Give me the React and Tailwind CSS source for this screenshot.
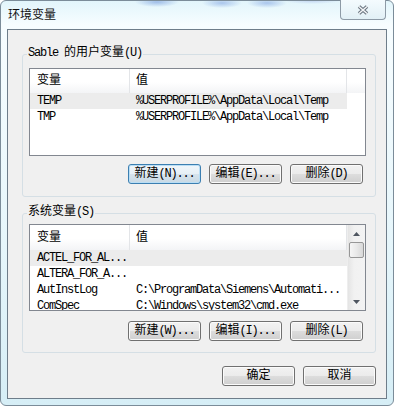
import React from "react";

const latin = "tracking-[-1.2px]";

const Btn = ({ children, focused }) => (
  <div
    className={`flex h-[20px] w-[73px] items-center justify-center rounded-[3px] border ${
      focused
        ? "border-[#3c7fb1] shadow-[inset_0_0_0_1px_#b9def5] bg-[linear-gradient(#f0f6fa_0%,#e6eff5_50%,#d6e3ec_50%,#c9d9e4_100%)]"
        : "border-[#707070] shadow-[inset_0_0_0_1px_#fbfbfb] bg-[linear-gradient(#f2f2f2_0%,#ebebeb_50%,#dddddd_50%,#cfcfcf_100%)]"
    }`}
  >
    <span className="whitespace-nowrap">{children}</span>
  </div>
);

const Row = ({ name, value, selected }) => (
  <div className={`flex h-[16px] w-[317px] shrink-0 items-center ${selected ? "bg-[#ececec]" : ""}`}>
    <div className={`w-[100px] overflow-hidden whitespace-nowrap pl-[7px] ${latin}`}>{name}</div>
    <div className={`w-[217px] overflow-hidden whitespace-nowrap pl-[6px] ${latin}`}>{value}</div>
  </div>
);

const Header = ({ tall }) => (
  <div
    className={`flex ${tall ? "h-[25px]" : "h-[24px]"} shrink-0 bg-[linear-gradient(#ffffff_0%,#ffffff_55%,#f3f4f6_100%)]`}
  >
    <div className="flex w-[100px] items-center border-r border-[#e3e5e8] pl-[7px]">变量</div>
    <div className="flex w-[217px] items-center border-r border-[#e3e5e8] pl-[6px]">值</div>
    <div className="flex-1" />
  </div>
);

const Arrow = ({ down }) => (
  <svg width="7" height="4" viewBox="0 0 7 4">
    <path d={down ? "M0 0H7L3.5 4Z" : "M0 4H7L3.5 0Z"} fill="#4f5660" />
  </svg>
);

const Scrollbar = () => (
  <div className="flex flex-1 flex-col border-l border-[#eeeeee] bg-[linear-gradient(to_right,#e4e4e4,#f1f1f1_35%,#f3f3f3)]">
    <div className="flex h-[17px] items-center justify-center">
      <Arrow />
    </div>
    <div className="mx-[1px] h-[16px] rounded-[2px] border border-[#979797] bg-[linear-gradient(to_right,#f6f6f6,#e9e9e9_50%,#d8d8d8)]" />
    <div className="flex-1" />
    <div className="flex h-[17px] items-center justify-center">
      <Arrow down />
    </div>
  </div>
);

const Group = ({ label, children, className }) => (
  <div className={`relative ml-[14px] flex w-[354px] flex-col rounded-[3px] border border-[#d5dfe5] ${className}`}>
    <span className="absolute left-[4px] top-[-9px] bg-[#f0f0f0] px-[1px] leading-[14px]">{label}</span>
    {children}
  </div>
);

export default function App() {
  return (
    <div className="h-[406px] w-[394px] overflow-hidden bg-white font-['Liberation_Mono','Noto_Sans_CJK_SC',monospace] text-[12px] leading-[14px] text-black">
      <div className="flex h-[406px] w-[394px] flex-col rounded-[6px] border border-[#7b8c99] bg-[linear-gradient(180deg,#e2f5fb_0%,#f7fdff_24px,#e6f6fb_60%,#d6eef6_100%)] px-[6px] pb-[6px]">
        {/* title bar */}
        <div className="flex h-[28px] shrink-0 items-start justify-between bg-[radial-gradient(22px_5px_at_150px_1px,#9fbde8,transparent),radial-gradient(20px_5px_at_215px_2px,#a9c5ec,transparent),radial-gradient(20px_5px_at_260px_2px,#a9c5ec,transparent),radial-gradient(28px_3px_at_305px_0px,#c6d9f3,transparent)]">
          <span className="ml-[1px] mt-[6px] font-['Noto_Sans_CJK_SC',sans-serif] text-[12px] leading-[14px] text-[#111]">环境变量</span>
          <div className="-mt-[1px] mr-[1px] flex h-[20px] w-[46px] items-center justify-center rounded-b-[4px] border border-t-0 border-[#8d9aa6] bg-[linear-gradient(#f4fbfe,#e2f0f6)]">
            <svg width="12" height="10" viewBox="0 0 12 10">
              <path d="M2 1.5L10 8.5M10 1.5L2 8.5" stroke="#66717c" strokeWidth="3.6" />
              <path d="M2 1.5L10 8.5M10 1.5L2 8.5" stroke="#f3f5f7" strokeWidth="1.6" />
            </svg>
          </div>
        </div>

        {/* client area */}
        <div className="flex h-[370px] flex-col border border-[#6e7d8a] bg-[#f0f0f0]">
          <Group
            className="mt-[24px] h-[143px] pb-[12px] pl-[6px] pr-[12px] pt-[13px]"
            label={
              <>
                <span className={latin}>Sable </span>的用户变量<span className={latin}>(U)</span>
              </>
            }
          >
            <div className="flex h-[88px] w-[337px] flex-col border border-[#828790] bg-white">
              <Header />
              <Row name="TEMP" value="%USERPROFILE%\AppData\Local\Temp" selected />
              <Row name="TMP" value="%USERPROFILE%\AppData\Local\Temp" />
            </div>
            <div className="mt-[8px] flex justify-end gap-[8px]">
              <Btn focused>
                新建<span className={latin}>(N)...</span>
              </Btn>
              <Btn>
                编辑<span className={latin}>(E)...</span>
              </Btn>
              <Btn>
                删除<span className={latin}>(D)</span>
              </Btn>
            </div>
          </Group>

          <Group
            className="mt-[16px] h-[140px] pb-[11px] pl-[6px] pr-[12px] pt-[10px]"
            label={
              <>
                系统变量<span className={latin}>(S)</span>
              </>
            }
          >
            <div className="flex h-[87px] w-[337px] border border-[#828790] bg-white">
              <div className="flex w-[317px] flex-col overflow-hidden">
                <Header tall />
                <Row name="ACTEL_FOR_AL..." value="" selected />
                <Row name="ALTERA_FOR_A..." value="" />
                <Row name="AutInstLog" value="C:\ProgramData\Siemens\Automati..." />
                <Row name="ComSpec" value="C:\Windows\system32\cmd.exe" />
              </div>
              <Scrollbar />
            </div>
            <div className="mt-[10px] flex justify-end gap-[8px]">
              <Btn>
                新建<span className={latin}>(W)...</span>
              </Btn>
              <Btn>
                编辑<span className={latin}>(I)...</span>
              </Btn>
              <Btn>
                删除<span className={latin}>(L)</span>
              </Btn>
            </div>
          </Group>

          <div className="mt-[13px] flex justify-end gap-[8px] pr-[10px]">
            <Btn>确定</Btn>
            <Btn>取消</Btn>
          </div>
        </div>
      </div>
    </div>
  );
}
